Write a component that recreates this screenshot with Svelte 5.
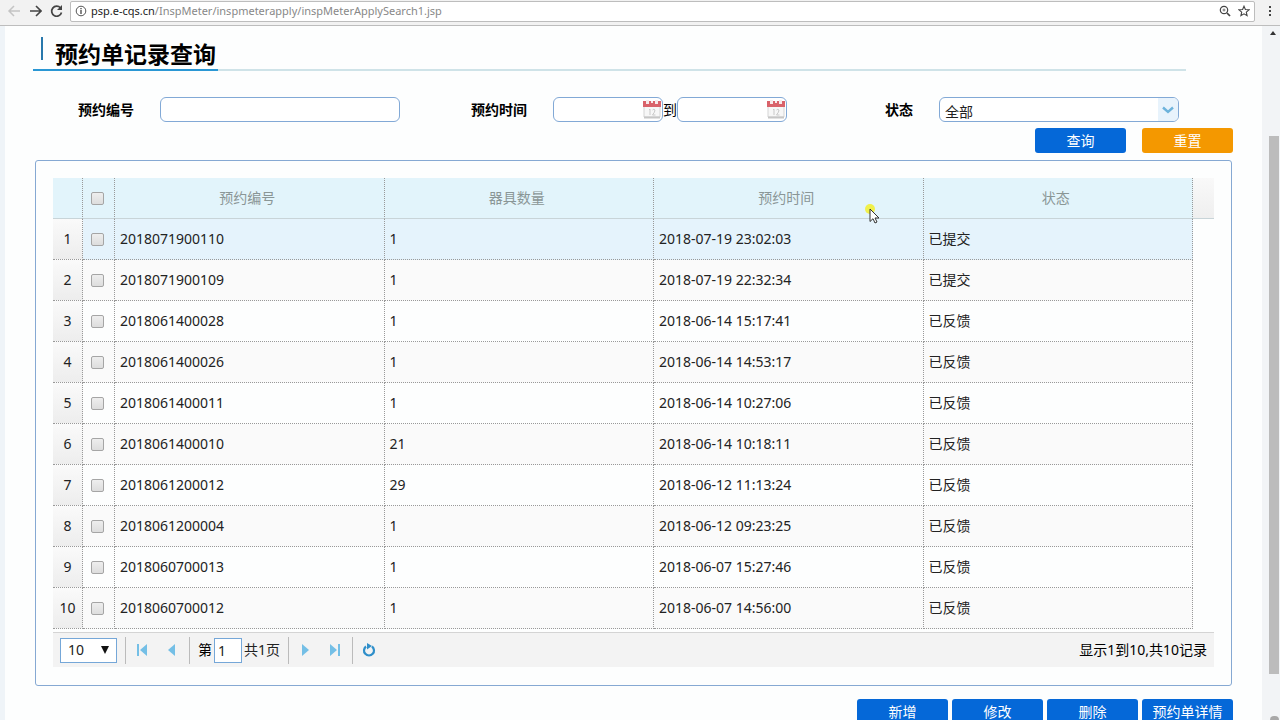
<script lang="ts">
	type Row = { id: string; count: number; time: string; status: string };

	let number = '';
	let dateFrom = '';
	let dateTo = '';
	let status = '全部';
	let pageSize = '10';
	let page = '1';
	let selected: boolean[] = Array(10).fill(false);

	const columns = ['预约编号', '器具数量', '预约时间', '状态'];
	const actions = ['新增', '修改', '删除', '预约单详情'];

	const rows: Row[] = [
		{ id: '2018071900110', count: 1, time: '2018-07-19 23:02:03', status: '已提交' },
		{ id: '2018071900109', count: 1, time: '2018-07-19 22:32:34', status: '已提交' },
		{ id: '2018061400028', count: 1, time: '2018-06-14 15:17:41', status: '已反馈' },
		{ id: '2018061400026', count: 1, time: '2018-06-14 14:53:17', status: '已反馈' },
		{ id: '2018061400011', count: 1, time: '2018-06-14 10:27:06', status: '已反馈' },
		{ id: '2018061400010', count: 21, time: '2018-06-14 10:18:11', status: '已反馈' },
		{ id: '2018061200012', count: 29, time: '2018-06-12 11:13:24', status: '已反馈' },
		{ id: '2018061200004', count: 1, time: '2018-06-12 09:23:25', status: '已反馈' },
		{ id: '2018060700013', count: 1, time: '2018-06-07 15:27:46', status: '已反馈' },
		{ id: '2018060700012', count: 1, time: '2018-06-07 14:56:00', status: '已反馈' }
	];

	function toggleAll(event: Event) {
		const checked = (event.target as HTMLInputElement).checked;
		selected = selected.map(() => checked);
	}

	function reset() {
		number = '';
		dateFrom = '';
		dateTo = '';
		status = '全部';
	}
</script>

{#snippet calendar()}
	<svg class="calendar" width="18" height="20" viewBox="0 0 18 20" aria-hidden="true">
		<path d="M1 5h16v13H1z" fill="#f7f7f7" stroke="#d5d5d5" />
		<path d="M1 18.5h16" stroke="#c6c6c6" stroke-width="2" />
		<path d="M0 2h18v6H0z" fill="#d9626a" />
		<path d="M3 1h3v4H3zM12 1h3v4h-3zM8 2h2v2H8z" fill="#f6e9ea" />
		<path d="M6 11l1-1v6M9.5 11q1.5-1.5 2.5 0q0 2-2.500 5h3" fill="none" stroke="#c9c9c9" />
	</svg>
{/snippet}

<div class="window">
	<header class="toolbar">
		<button class="tool" aria-label="后退">
			<svg width="14" height="14" viewBox="0 0 14 14"><path d="M13 7H2M7 2L2 7l5 5" fill="none" stroke="#c4c4c4" stroke-width="1.5" /></svg>
		</button>
		<button class="tool" aria-label="前进">
			<svg width="14" height="14" viewBox="0 0 14 14"><path d="M2 7h11M8 2l5 5-5 5" fill="none" stroke="#444" stroke-width="1.6" /></svg>
		</button>
		<button class="tool" aria-label="刷新">
			<svg width="14" height="14" viewBox="0 0 14 14"><path d="M11.500 4A5 5 0 1 0 12.500 8.500" fill="none" stroke="#444" stroke-width="1.7" /><path d="M13 1v5H8z" fill="#444" /></svg>
		</button>
		<div class="address">
			<svg width="12" height="12" viewBox="0 0 12 12" aria-hidden="true"><circle cx="6" cy="6" r="4.8" fill="none" stroke="#555" /><path d="M6 5v4M6 3v1.3" stroke="#444" stroke-width="1.3" /></svg>
			<span class="url"><b>psp.e-cqs.cn</b>/InspMeter/inspmeterapply/inspMeterApplySearch1.jsp</span>
			<svg width="12" height="12" viewBox="0 0 12 12" aria-hidden="true"><circle cx="5" cy="5" r="3.7" fill="none" stroke="#444" stroke-width="1.2" /><path d="M8 8l3 3" stroke="#444" stroke-width="1.7" /><path d="M3.500 5h3M5 3.500v3" stroke="#555" stroke-width=".8" /></svg>
			<svg width="12" height="12" viewBox="0 0 12 12" aria-hidden="true"><path d="M6 1.200l1.400 3.300 3.600.3-2.700 2.400.8 3.500L6 8.800l-3.100 1.900.8-3.500L1 4.800l3.600-.3z" fill="none" stroke="#444" stroke-width="1.1" /></svg>
		</div>
		<button class="tool more" aria-label="菜单">
			<svg width="4" height="12" viewBox="0 0 4 12"><path d="M1 1h2v2H1zM1 5h2v2H1zM1 9h2v2H1z" fill="#444" /></svg>
		</button>
	</header>

	<div class="viewport">
		<main>
			<div class="heading">
				<h1>预约单记录查询</h1>
			</div>

			<form on:submit|preventDefault>
				<div class="fields">
					<div class="field">
						<label for="number">预约编号</label>
						<div class="control"><input id="number" type="text" bind:value={number} /></div>
					</div>
					<div class="field">
						<label for="date-from">预约时间</label>
						<div class="control range">
							<div class="date">
								<input id="date-from" type="text" bind:value={dateFrom} />
								{@render calendar()}
							</div>
							<label class="to" for="date-to">到</label>
							<div class="date">
								<input id="date-to" type="text" bind:value={dateTo} />
								{@render calendar()}
							</div>
						</div>
					</div>
					<div class="field">
						<label for="status">状态</label>
						<div class="control combo">
							<select id="status" bind:value={status}>
								<option>全部</option>
								<option>已提交</option>
								<option>已反馈</option>
							</select>
							<span class="arrow">
								<svg width="12" height="8" viewBox="0 0 12 8" aria-hidden="true"><path d="M1 1.500l5 4.500 5-4.500" fill="none" stroke="#6db3dc" stroke-width="2.4" /></svg>
							</span>
						</div>
					</div>
				</div>
				<div class="buttons">
					<button class="btn" type="submit">查询</button>
					<button class="btn orange" type="button" on:click={reset}>重置</button>
				</div>
			</form>

			<section class="panel">
				<table>
					<thead>
						<tr>
							<th class="index"></th>
							<th class="check"><input type="checkbox" aria-label="全选" on:change={toggleAll} /></th>
							{#each columns as column}
								<th>{column}</th>
							{/each}
							<th class="filler"></th>
						</tr>
					</thead>
					<tbody>
						{#each rows as row, i}
							<tr class:active={i === 0}>
								<td class="index">{i + 1}</td>
								<td class="check"><input type="checkbox" aria-label={row.id} bind:checked={selected[i]} /></td>
								<td>{row.id}</td>
								<td>{row.count}</td>
								<td>{row.time}</td>
								<td>{row.status}</td>
								<td class="filler"></td>
							</tr>
						{/each}
					</tbody>
				</table>

				<div class="pager">
					<div class="size">
						<select aria-label="每页记录数" bind:value={pageSize}>
							<option>10</option>
							<option>20</option>
							<option>50</option>
						</select>
						<svg width="8" height="8" viewBox="0 0 8 8" aria-hidden="true"><path d="M0 0h8L4 8z" fill="#111" /></svg>
					</div>
					<div class="group">
						<button aria-label="首页"><svg width="12" height="12" viewBox="0 0 12 12"><path d="M1 0h2v12H1zM11 0v12L4 6z" fill="#74bfe6" /></svg></button>
						<button aria-label="上一页"><svg width="12" height="12" viewBox="0 0 12 12"><path d="M9 0v12L2 6z" fill="#74bfe6" /></svg></button>
					</div>
					<div class="group page">
						<label for="page">第</label>
						<input id="page" type="text" bind:value={page} />
						<span>共1页</span>
					</div>
					<div class="group">
						<button aria-label="下一页"><svg width="12" height="12" viewBox="0 0 12 12"><path d="M3 0v12l7-6z" fill="#74bfe6" /></svg></button>
						<button aria-label="末页"><svg width="12" height="12" viewBox="0 0 12 12"><path d="M1 0v12l7-6zM9 0h2v12H9z" fill="#74bfe6" /></svg></button>
					</div>
					<div class="group">
						<button aria-label="重新加载"><svg width="14" height="14" viewBox="0 0 14 14"><path d="M4 3.500a5 5 0 1 0 6 0" fill="none" stroke="#2f8fca" stroke-width="2.2" /><path d="M5 0l5 3-5 3.500z" fill="#2f8fca" /></svg></button>
					</div>
					<span class="summary">显示1到10,共10记录</span>
				</div>
			</section>

			<div class="buttons actions">
				{#each actions as action}
					<button class="btn">{action}</button>
				{/each}
			</div>
		</main>

		<div class="scrollbar">
			<svg width="6" height="4" viewBox="0 0 6 4" aria-hidden="true"><path d="M3 0l3 4H0z" fill="#333" /></svg>
			<div class="track"><div class="thumb"></div></div>
			<span class="knob"></span>
		</div>
	</div>

	<svg class="pointer" width="20" height="24" viewBox="0 0 20 24" aria-hidden="true">
		<circle cx="7" cy="7" r="5" fill="#f2ee2c" opacity=".85" />
		<path d="M7 7v12.500l3-2.800 2 4.300 2-1-2-4h4z" fill="#fff" stroke="#333" />
	</svg>
</div>

<style>
	:global(body) {
		margin: 0;
		background: #fdfefe;
	}

	.window {
		height: 100vh;
		display: flex;
		flex-direction: column;
		overflow: hidden;
		position: relative;
		font-family: 'Noto Sans', 'Noto Sans CJK SC', sans-serif;
		font-size: 14px;
		line-height: 20px;
		color: #222;
	}

	button,
	input,
	select {
		font: inherit;
		color: inherit;
		margin: 0;
		box-sizing: border-box;
	}

	svg {
		display: block;
		flex: none;
	}

	.toolbar {
		flex: none;
		display: flex;
		align-items: center;
		box-sizing: border-box;
		height: 26px;
		padding: 0 8px 3px 7px;
		background: #f2f2f2;
		border-bottom: 1px solid #bdbdbd;
	}

	.tool {
		padding: 0;
		margin-right: 7px;
		border: 0;
		background: none;
	}

	.tool.more {
		margin: 0 0 0 13px;
	}

	.address {
		flex: 1;
		display: flex;
		align-items: center;
		gap: 7px;
		box-sizing: border-box;
		height: 21px;
		padding: 0 4px;
		background: #fff;
		border: 1px solid #bdbdbd;
		border-radius: 2px;
		font-size: 11px;
	}

	.url {
		flex: 1;
		margin-left: -3px;
		color: #888;
	}

	.url b {
		font-weight: 400;
		color: #222;
	}

	.viewport {
		flex: 1;
		min-height: 0;
		display: flex;
		overflow: hidden;
	}

	main {
		flex: 1;
		border-left: 5px solid #eff4f8;
	}

	.heading {
		margin: 0 76px 0 28px;
		border-bottom: 2px solid #cfe3e8;
	}

	h1 {
		position: relative;
		display: inline-block;
		vertical-align: top;
		margin: 0 0 -2px;
		padding: 14px 2px 1px 22px;
		border-bottom: 2px solid #2a97d4;
		font-size: 23px;
		line-height: 28px;
		color: #000;
	}

	h1::before {
		content: '';
		position: absolute;
		left: 8px;
		top: 11px;
		width: 2px;
		height: 23px;
		background: #2878ac;
	}

	.fields {
		display: grid;
		grid-template-columns: 395fr 393fr 386fr;
		margin: 26px 83px 0 0;
	}

	.field {
		display: flex;
		align-items: center;
		justify-content: flex-end;
		gap: 26px;
	}

	label {
		font-weight: 700;
		color: #000;
	}

	.control {
		width: 240px;
	}

	.control input,
	.control select {
		display: block;
		width: 100%;
		height: 25px;
		padding: 0 5px;
		border: 1px solid #82a9d6;
		border-radius: 6px;
		background: #fff;
		appearance: none;
	}

	.range {
		display: flex;
		align-items: center;
	}

	.date {
		position: relative;
		width: 110px;
	}

	.calendar {
		position: absolute;
		right: 2px;
		top: 2px;
	}

	.to,
	.page label {
		font-weight: 400;
	}

	.combo {
		position: relative;
	}

	.control select {
		padding-top: 4px;
	}

	.arrow {
		position: absolute;
		right: 1px;
		top: 1px;
		bottom: 1px;
		width: 20px;
		display: flex;
		align-items: center;
		justify-content: center;
		background: #e8f3fc;
		border-radius: 0 5px 5px 0;
		pointer-events: none;
	}

	.buttons {
		display: flex;
		justify-content: flex-end;
		gap: 16px;
		margin: 6px 29px 0 0;
	}

	.btn {
		width: 91px;
		height: 25px;
		padding: 0;
		border: 0;
		border-radius: 3px;
		background: #0568d8;
		color: #fff;
		white-space: nowrap;
	}

	.btn.orange {
		background: #f49800;
	}

	.panel {
		margin: 7px 30px 0;
		padding: 17px 17px 18px;
		border: 1px solid #86a9d3;
		border-radius: 3px;
	}

	table {
		width: 100%;
		table-layout: fixed;
		border-collapse: separate;
		border-spacing: 0;
	}

	th,
	td {
		box-sizing: border-box;
		height: 41px;
		padding: 0 5px;
		border-right: 1px dotted #999;
		border-bottom: 1px dotted #999;
		text-align: left;
	}

	th {
		padding: 0 8px 0 4px;
		background: #e2f4fb;
		border-bottom: 1px solid #c8d4d8;
		font-weight: 400;
		text-align: center;
		color: #8a9696;
	}

	tr:nth-child(even) td {
		background: #fafafa;
	}

	tr.active td {
		background: #e5f3fc;
	}

	.index {
		width: 30px;
		padding: 0;
		text-align: center;
	}

	tbody tr td.index {
		background: linear-gradient(#fafafa, #ededed);
	}

	.check {
		width: 32px;
		padding: 0 2px 0 0;
	}

	.filler {
		width: 21px;
		padding: 0;
		border-right: 0;
	}

	th.filler {
		background: linear-gradient(#f9f9f9, #efefef);
	}

	tbody tr td.filler {
		background: none;
		border: 0;
	}

	input[type='checkbox'] {
		display: block;
		width: 13px;
		height: 13px;
		margin: 0 auto;
		border: 1px solid #a5a5a5;
		border-radius: 2px;
		background: linear-gradient(#eee, #ddd);
		appearance: none;
	}

	input[type='checkbox']:checked {
		background: #2a97d4;
	}

	.pager {
		display: flex;
		align-items: center;
		box-sizing: border-box;
		height: 35px;
		margin-top: 3px;
		padding: 0 7px;
		background: #f3f3f3;
		border-top: 1px solid #d4d4d4;
	}

	.size {
		position: relative;
		margin-right: 8px;
	}

	.size select {
		display: block;
		width: 57px;
		height: 25px;
		padding: 0 7px;
		border: 1px solid #75a7d8;
		border-radius: 0;
		background: #fff;
		appearance: none;
	}

	.size svg {
		position: absolute;
		right: 8px;
		top: 8px;
		pointer-events: none;
	}

	.group {
		display: flex;
		align-items: center;
		height: 27px;
		padding: 0 2px 0 1px;
		border-left: 1px solid #bbb;
	}

	.group button {
		display: flex;
		align-items: center;
		justify-content: center;
		width: 30px;
		height: 24px;
		padding: 0;
		border: 0;
		background: none;
	}

	.page {
		gap: 2px;
		padding: 0 8px;
	}

	.page input {
		width: 28px;
		height: 25px;
		padding: 0 3px;
		border: 1px solid #75a7d8;
		background: #fff;
	}

	.summary {
		margin-left: auto;
		color: #000;
	}

	.actions {
		gap: 4px;
		margin-top: 13px;
	}

	.scrollbar {
		flex: none;
		display: flex;
		flex-direction: column;
		align-items: flex-end;
		box-sizing: border-box;
		width: 18px;
		padding: 5px 1px 0 0;
		background: #f2f4f6;
	}

	.scrollbar > svg {
		margin-right: 3px;
	}

	.track {
		flex: 1;
		width: 10px;
		display: flex;
		flex-direction: column;
	}

	.track::before {
		content: '';
		flex: 101;
	}

	.track::after {
		content: '';
		flex: 42;
	}

	.thumb {
		flex: 538;
		background: #bcbcbc;
	}

	.knob {
		width: 9px;
		height: 4px;
		border-radius: 5px 5px 0 0;
		background: #a8a8a8;
	}

	.pointer {
		position: absolute;
		left: 863px;
		top: 202px;
		pointer-events: none;
	}
</style>
